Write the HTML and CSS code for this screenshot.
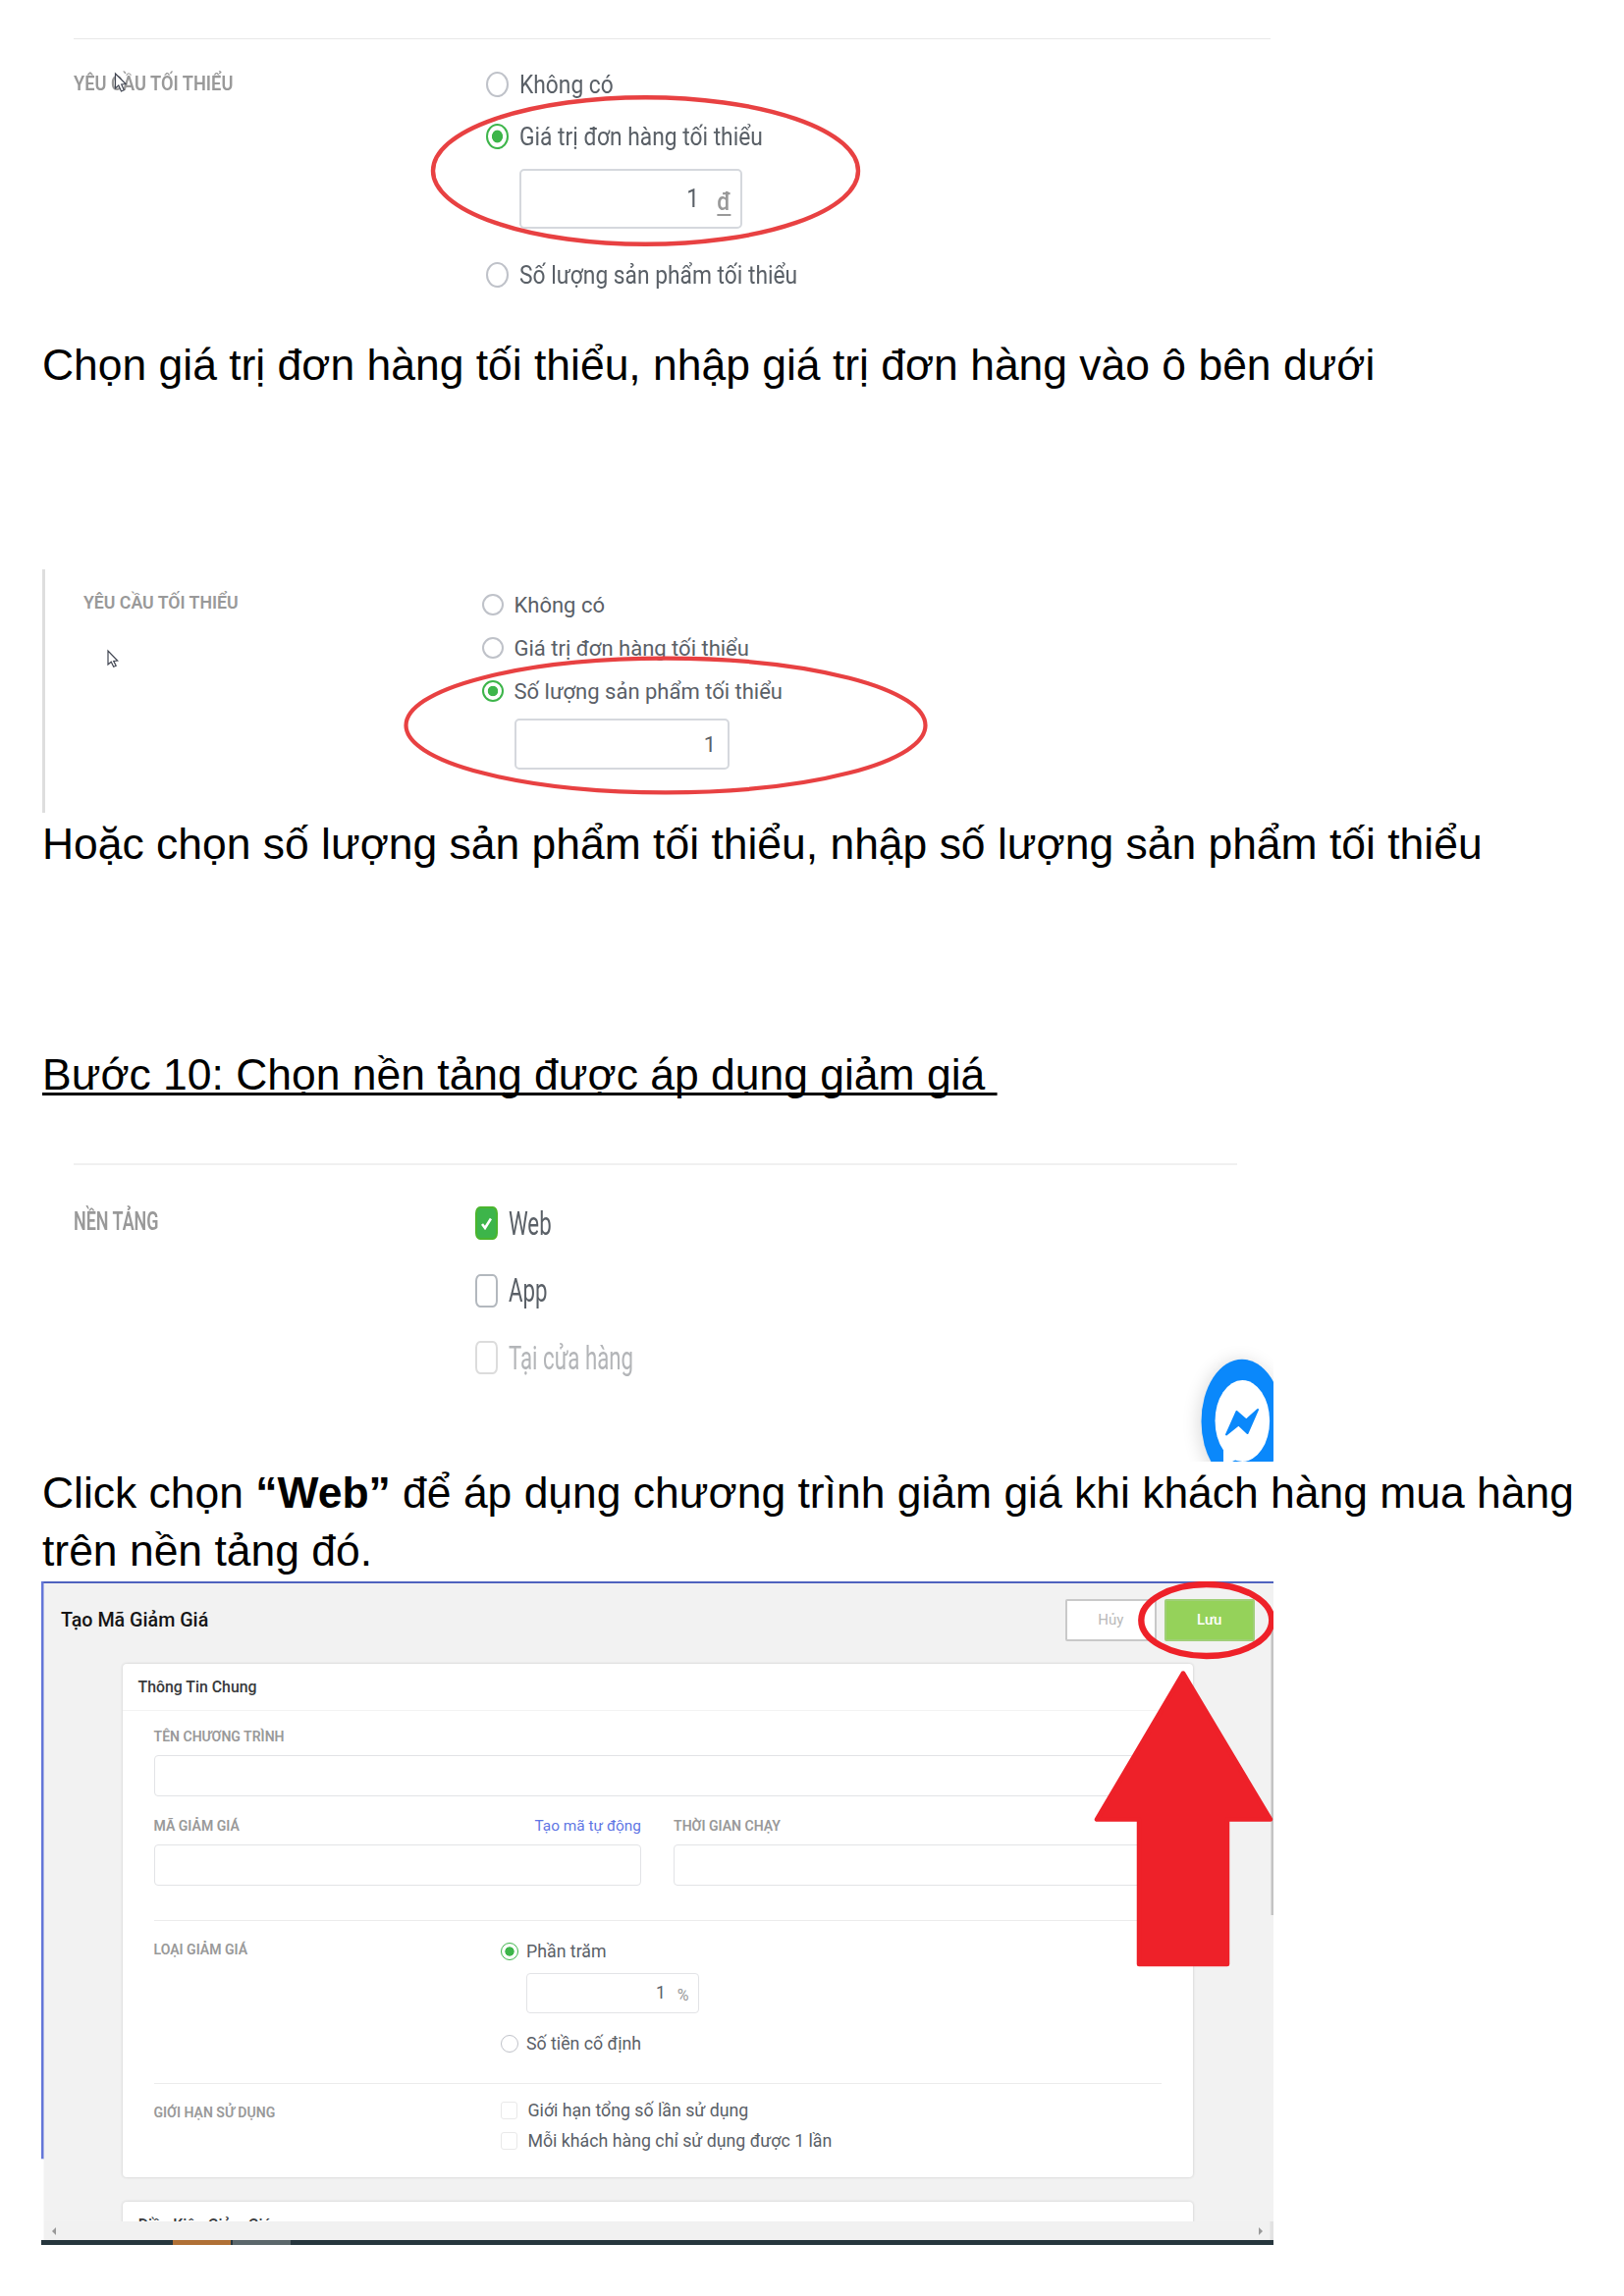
FILE: index.html
```html
<!DOCTYPE html>
<html lang="vi">
<head>
<meta charset="utf-8">
<title>Hướng dẫn tạo mã giảm giá</title>
<link rel="stylesheet" href="styles.css">
</head>
<body>
<main class="page">
  <section class="figure fig-order">
    <hr class="rule">
    <div class="setting">
      <div class="caption"><span class="x">YÊU CẦU TỐI THIỂU</span></div>
      <div class="options">
        <div class="option"><i class="radio"></i><span class="x">Không có</span></div>
        <div class="option"><i class="radio on"></i><span class="x">Giá trị đơn hàng tối thiểu</span></div>
        <div class="field"><span class="x num">1</span><span class="x unit dong">đ</span></div>
        <div class="option"><i class="radio"></i><span class="x">Số lượng sản phẩm tối thiểu</span></div>
      </div>
    </div>
    <svg class="overlay" width="1254" height="342" viewBox="43 0 1254 342">
      <ellipse cx="657.5" cy="174" rx="216.5" ry="74.8" fill="none" stroke="#e84142" stroke-width="4.4"/>
      <path d="M117.500 75v15l3.300-3 2.700 6 2.800-1.200-2.600-5.800 4.400-.4z" fill="#fff" stroke="#414652" stroke-width="1.200"/>
    </svg>
  </section>

  <p class="text text-order">Chọn giá trị đơn hàng tối thiểu, nhập giá trị đơn hàng vào ô bên dưới</p>

  <section class="figure fig-quantity">
    <div class="setting">
      <div class="caption"><span class="x">YÊU CẦU TỐI THIỂU</span></div>
      <div class="options">
        <div class="option"><i class="radio"></i><span class="x">Không có</span></div>
        <div class="option"><i class="radio"></i><span class="x">Giá trị đơn hàng tối thiểu</span></div>
        <div class="option"><i class="radio on"></i><span class="x">Số lượng sản phẩm tối thiểu</span></div>
        <div class="field"><span class="x num">1</span></div>
      </div>
    </div>
    <svg class="overlay" width="1254" height="248" viewBox="43 580 1254 248">
      <ellipse cx="678" cy="739" rx="264.500" ry="68.300" fill="none" stroke="#e84142" stroke-width="4.200"/>
      <path d="M110 663v14l3.200-2.800 2.500 5 2.500-1-2.500-4.800 4-.4z" fill="#fff" stroke="#414652" stroke-width="1.200"/>
    </svg>
  </section>

  <p class="text text-quantity">Hoặc chọn số lượng sản phẩm tối thiểu, nhập số lượng sản phẩm tối thiểu</p>
  <p class="text text-step"><u>Bước 10: Chọn nền tảng được áp dụng giảm giá </u></p>

  <section class="figure fig-platform">
    <hr class="rule">
    <div class="setting">
      <div class="caption"><span class="x">NỀN TẢNG</span></div>
      <div class="options">
        <div class="option"><i class="check on"><svg width="11" height="13" viewBox="0 0 11 13"><path d="M1 7l3 4L10 1.500" fill="none" stroke="#fff" stroke-width="2.600"/></svg></i><span class="x">Web</span></div>
        <div class="option"><i class="check"></i><span class="x">App</span></div>
        <div class="option off"><i class="check"></i><span class="x">Tại cửa hàng</span></div>
      </div>
    </div>
    <svg class="overlay" width="1254" height="304" viewBox="43 1185 1254 304">
      <defs><filter id="soft" x="-50%" y="-50%" width="200%" height="200%"><feGaussianBlur stdDeviation="9"/></filter></defs>
      <ellipse cx="1263" cy="1450" rx="42" ry="64" fill="#000" opacity=".14" filter="url(#soft)"/>
      <ellipse cx="1265" cy="1448" rx="41.500" ry="63.300" fill="#0a88fb"/>
      <ellipse cx="1265.300" cy="1447.500" rx="27.800" ry="41.500" fill="#fff"/>
      <path d="M1246 1474v15h9l6-3z" fill="#fff"/>
      <path d="M1249 1461.500l10.500-23.500 9.800 8.500 11.700-10.500-10.500 24-9-8.500z" fill="#0a88fb" stroke="#0a88fb" stroke-width="2" stroke-linejoin="round"/>
    </svg>
  </section>

  <p class="text text-platform">Click chọn <b>“Web”</b> để áp dụng chương trình giảm giá khi khách hàng mua hàng<br>trên nền tảng đó.</p>

  <section class="figure fig-form">
    <div class="app">
      <header class="bar">
        <h1 class="title">Tạo Mã Giảm Giá</h1>
        <div class="actions">
          <span class="btn">Hủy</span>
          <span class="btn save">Lưu</span>
        </div>
      </header>
      <div class="card">
        <h2 class="card-title">Thông Tin Chung</h2>
        <div class="card-body">
          <div class="caption">TÊN CHƯƠNG TRÌNH</div>
          <div class="field wide"></div>
          <div class="pair">
            <div>
              <div class="caption"><span>MÃ GIẢM GIÁ</span><a class="link">Tạo mã tự động</a></div>
              <div class="field wide"></div>
            </div>
            <div>
              <div class="caption">THỜI GIAN CHẠY</div>
              <div class="field wide"></div>
            </div>
          </div>
          <hr class="rule">
          <div class="setting kind">
            <div class="caption">LOẠI GIẢM GIÁ</div>
            <div class="options">
              <div class="option"><i class="radio on"></i><span>Phần trăm</span></div>
              <div class="field"><span class="num">1</span><span class="unit">%</span></div>
              <div class="option"><i class="radio"></i><span>Số tiền cố định</span></div>
            </div>
          </div>
          <hr class="rule">
          <div class="setting limit">
            <div class="caption">GIỚI HẠN SỬ DỤNG</div>
            <div class="options">
              <div class="option"><i class="check"></i><span>Giới hạn tổng số lần sử dụng</span></div>
              <div class="option"><i class="check"></i><span>Mỗi khách hàng chỉ sử dụng được 1 lần</span></div>
            </div>
          </div>
        </div>
      </div>
      <div class="card next">
        <h2 class="card-title">Điều Kiện Giảm Giá</h2>
      </div>
    </div>
    <div class="scroller"><i class="arrow left"></i><i class="arrow right"></i></div>
    <div class="taskbar"><i class="task orange"></i><i class="task gray"></i></div>
    <svg class="overlay" width="1255" height="676" viewBox="42 1611 1255 676">
      <rect x="42" y="1611" width="2.500" height="588.500" fill="#6476d8"/>
      <rect x="42" y="2199.500" width="2.500" height="82.500" fill="#fff"/>
      <rect x="1294.500" y="1650" width="2.500" height="301" fill="#c3c3c3"/>
      <rect x="1293.500" y="2263" width="3.500" height="19" fill="#e2e2e2"/>
      <ellipse cx="1228.800" cy="1650.500" rx="66.500" ry="36.500" fill="none" stroke="#ee2129" stroke-width="6.400"/>
      <path d="M1205 1704.500L1117 1853.500h43V2001h90V1853.500h44z" fill="#ee2129" stroke="#ee2129" stroke-width="4.500" stroke-linejoin="round"/>
    </svg>
  </section>
</main>
</body>
</html>
```
FILE: styles.css
```css
* { box-sizing: border-box; }
body { margin: 0; background: #fff; }
.page { width: 1654px; height: 2339px; padding-left: 43px; overflow: hidden; font-family: Roboto, sans-serif; color: #5a6067; }
.figure { position: relative; width: 1254px; overflow: hidden; --sx: 1; }
.overlay { position: absolute; left: 0; top: 0; }
.x { display: inline-block; white-space: nowrap; transform: scaleX(var(--sx)); transform-origin: left; }
.rule { height: 1px; margin: 0; border: 0; background: #e8e8e8; }
.setting { display: grid; }
.caption { font-weight: 600; color: #999; }
.options { display: flex; flex-direction: column; }
.option { display: flex; align-items: center; white-space: nowrap; }
.radio, .check { flex: none; }
.radio { border: 2px solid #bfc2c9; border-radius: 50%; }
.radio.on { border-color: #3db54a; background: radial-gradient(closest-side, #3db54a 54%, #fff 62%); }
.field { display: flex; align-items: center; justify-content: flex-end; background: #fff; border: 2px solid #d5d8dd; border-radius: 5px; }
.field .x { transform-origin: right; }
.unit { color: #999; }

.text { margin: 0; font: 44.45px/59px "Liberation Sans", Arial, sans-serif; color: #000; white-space: nowrap; }
.text u { white-space: pre; text-decoration-thickness: 3px; text-underline-offset: 3px; text-decoration-skip-ink: none; }

/* Minimum order value */
.fig-order { height: 342px; padding-top: 39px; --sx: .911; }
.fig-order .rule { margin: 0 3px 33px 32px; }
.fig-order .setting { grid-template-columns: 420px 1fr; padding-left: 32px; }
.fig-order .caption { font-size: 20px; line-height: 24px; }
.fig-order .option { height: 26px; gap: 10.500px; font-size: 25px; margin-bottom: 27px; }
.fig-order .radio { width: 23px; height: 26px; }
.fig-order .field { width: 227px; height: 61px; margin: -7px 0 34px 34px; padding-right: 10px; gap: 16.500px; font-size: 25px; }
.dong { font-weight: 500; text-decoration: underline; text-underline-offset: 4px; padding-top: 6px; }

.text-order { margin-bottom: 179px; }

/* Minimum quantity */
.fig-quantity { height: 248px; padding: 25px 0 0 39px; border-left: 3px solid #dedede; }
.fig-quantity .overlay { left: -3px; }
.fig-quantity .setting { grid-template-columns: 406px 1fr; }
.fig-quantity .caption { font-size: 17.700px; line-height: 19px; }
.fig-quantity .option { height: 22px; gap: 10.500px; font-size: 22px; margin-bottom: 22px; }
.fig-quantity .radio { width: 22px; height: 22px; }
.fig-quantity .field { width: 219px; height: 52px; margin: -5px 0 0 33px; padding-right: 12px; font-size: 22px; }

.text-quantity { margin: 2px 0 176px; }
.text-step { margin-bottom: 61px; }

/* Platforms */
.fig-platform { height: 304px; --sx: .657; }
.fig-platform .rule { height: 2px; margin: 0 37px 42px 32px; background: #f0f0f0; }
.fig-platform .setting { grid-template-columns: 409px 1fr; padding-left: 32px; }
.fig-platform .caption { font-size: 26.700px; line-height: 30px; --sx: .672; }
.fig-platform .option { height: 34px; gap: 10.500px; font-size: 33.800px; margin-bottom: 34.500px; }
.fig-platform .check { display: flex; align-items: center; justify-content: center; width: 23px; height: 34px; border: 2px solid #b3b8be; border-radius: 5px / 7px; }
.fig-platform .check.on { background: #3db54a; border-color: #4bb52e; }
.fig-platform .off { color: #b3b5b8; }
.fig-platform .off .check { border-color: #dcdcdc; }

.text-platform { margin: 2px 0; }

/* Discount code form */
.fig-form { width: 1255px; height: 676px; margin-left: -1px; display: flex; flex-direction: column; }
.app { height: 652px; overflow: hidden; background: #f2f2f2; border-top: 2px solid #4f63bf; }
.bar { display: flex; justify-content: space-between; align-items: center; height: 74px; padding: 0 19px 0 20px; }
.title { margin: 0; font-size: 19.700px; font-weight: 500; color: #151515; }
.actions { display: flex; gap: 8px; }
.btn { display: flex; align-items: center; justify-content: center; width: 92.500px; height: 43px; background: #fff; border: 2px solid #c9c9c9; border-radius: 2px; font-size: 15px; color: #b9b9b9; }
.btn.save { background: #95d25a; border-color: #a0cf78; color: #fff; font-weight: 500; }
.card { width: 1090px; height: 523px; margin: 7.500px 0 0 82.500px; background: #fff; border-radius: 4px; box-shadow: 0 0 3px rgba(0,0,0,.18); }
.card.next { margin-top: 25px; height: 80px; }
.card-title { height: 48px; margin: 0; padding-left: 16px; border-bottom: 1.500px solid #f3f3f3; font-size: 15.850px; line-height: 48px; font-weight: 500; color: #383a3c; }
.card-body { padding: 17px 32px 0; }
.fig-form .caption { display: flex; justify-content: space-between; align-items: center; height: 18px; font-size: 14.050px; line-height: 18px; }
.link { font-size: 15.400px; font-weight: 400; color: #5f76e4; }
.fig-form .field { border: 1.500px solid #e2e3e6; border-radius: 4px; }
.fig-form .wide { height: 42px; margin-top: 10px; }
.pair { display: grid; grid-template-columns: 1fr 1fr; gap: 33px; margin: 21px 0 35px; }
.fig-form .rule { background: #ececec; }
.fig-form .setting { grid-template-columns: 353px 1fr; }
.fig-form .option { height: 18px; gap: 8.500px; font-size: 17.750px; }
.kind { padding: 22px 0 31px; }
.kind .caption { height: 14px; line-height: 14px; }
.fig-form .radio { width: 18px; height: 18px; border-width: 1px; }
.kind .field { width: 176px; height: 41px; margin: 13px 0 22px 26px; padding-right: 9px; gap: 12px; font-size: 17.500px; }
.kind .unit { font-size: 16px; padding-top: 4px; }
.limit { padding-top: 18.500px; }
.limit .caption { height: 22px; line-height: 22px; }
.limit .options { gap: 13px; }
.limit .option { gap: 10.500px; }
.limit .check { width: 17.500px; height: 18px; border: 1px solid #e9e9e9; border-radius: 3px; }
.scroller { display: flex; justify-content: space-between; align-items: center; height: 19px; padding: 0 11px; background: #f1f1f1; }
.arrow { border: 4.500px solid transparent; }
.arrow.left { border-right-color: #999; border-left: 0; }
.arrow.right { border-left-color: #999; border-right: 0; }
.taskbar { display: flex; height: 5px; padding-left: 134px; gap: 2px; background: #26363d; }
.task { width: 59px; }
.orange { background: #b07035; }
.gray { background: #5b676b; }
```
